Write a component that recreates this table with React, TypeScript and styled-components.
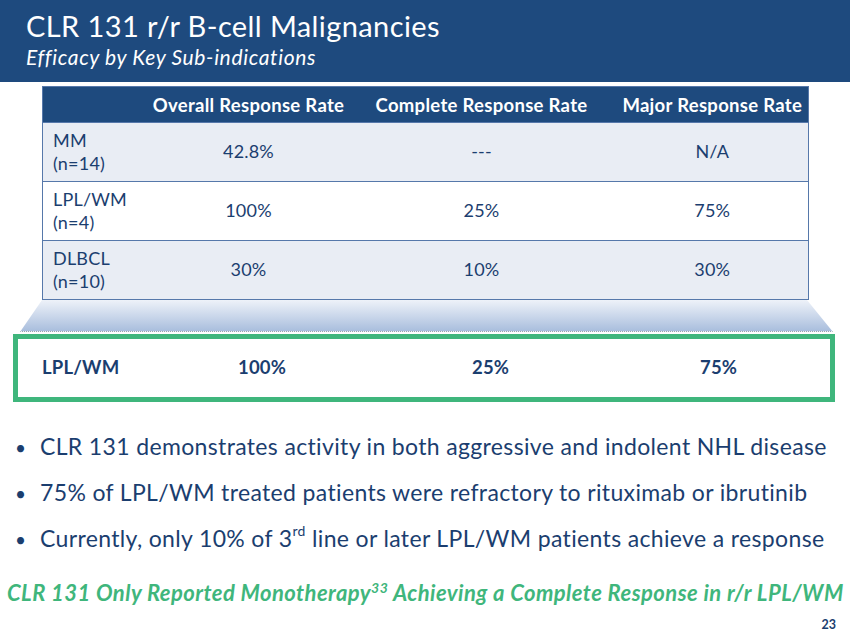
import styled, { createGlobalStyle } from "styled-components";

const GlobalStyle = createGlobalStyle`
  html, body {
    margin: 0;
    padding: 0;
    background: #fff;
  }
  body {
    font-family: Lato, "Open Sans", "Liberation Sans", sans-serif;
  }
`;

const navy = "#1b3e6f";
const green = "#3fb67c";

const Slide = styled.div`
  width: 850px;
  height: 638px;
  display: flex;
  flex-direction: column;
  overflow: hidden;
`;

const Header = styled.header`
  height: 82px;
  background: #1e4a7e;
  color: #fff;
  padding: 9px 0 0 26px;
  box-sizing: border-box;
`;

const Title = styled.h1`
  margin: 0;
  font-size: 29px;
  font-weight: 400;
  line-height: 34px;
  letter-spacing: 0.4px;
`;

const Subtitle = styled.div`
  font-size: 21px;
  font-style: italic;
  line-height: 26px;
  margin-top: 1px;
  letter-spacing: 0.65px;
`;

const Table = styled.table`
  margin: 4px 0 0 42px;
  width: 766px;
  border-collapse: collapse;
  table-layout: fixed;
  border: 1px solid #5678aa;
  color: ${navy};
  font-size: 18px;
  letter-spacing: 0.2px;
`;

const HeadCell = styled.th`
  background: #1e4a7e;
  color: #fff;
  font-weight: 700;
  font-size: 18.5px;
  letter-spacing: 0.3px;
  height: 35px;
  padding: 0;
  text-align: center;
  white-space: nowrap;
`;

const Row = styled.tr<{ $shaded?: boolean }>`
  background: ${(p) => (p.$shaded ? "#e9edf4" : "#fff")};
  border-top: 1px solid #5678aa;
  height: 59px;
`;

const LabelCell = styled.td`
  padding: 0 0 0 10px;
  line-height: 23px;
  vertical-align: middle;
`;

const ValueCell = styled.td`
  text-align: center;
  vertical-align: middle;
  padding: 0 0 2px;
`;

const Funnel = styled.div`
  margin: 0 0 0 20px;
  width: 813px;
  height: 32px;
  background: linear-gradient(#eef2f9, #a9bedd);
  clip-path: polygon(22px 0, 787px 0, 100% 100%, 0 100%);
  border-bottom: 1px dotted #9aa3ad;
  box-sizing: border-box;
`;

const Highlight = styled.div`
  margin: 2px 0 0 13px;
  width: 822px;
  height: 68px;
  box-sizing: border-box;
  border: 5px solid ${green};
  display: grid;
  grid-template-columns: 196px 234px 228px auto;
  align-items: center;
  padding: 0 0 2px 24px;
  color: ${navy};
  font-weight: 700;
  font-size: 18.5px;
  letter-spacing: 0.2px;
`;

const Bullets = styled.ul`
  list-style: none;
  margin: 22px 0 0 0;
  padding: 0;
  color: ${navy};
  font-size: 23px;
  letter-spacing: 0.35px;
`;

const Bullet = styled.li`
  display: flex;
  align-items: baseline;
  line-height: 45px;
  white-space: nowrap;

  &::before {
    content: "•";
    font-size: 19px;
    width: 40px;
    padding-left: 15px;
    box-sizing: border-box;
    flex: none;
  }

  sup {
    font-size: 14px;
    line-height: 0;
    position: relative;
    top: -2px;
  }
`;

const Tagline = styled.div`
  margin: 18px 0 0 7px;
  color: ${green};
  font-weight: 700;
  font-style: italic;
  font-size: 22px;
  line-height: 26px;
  white-space: nowrap;
  letter-spacing: 0.45px;

  sup {
    font-size: 14px;
    line-height: 0;
  }
`;

const PageNumber = styled.div`
  align-self: flex-end;
  margin: 11px 14px 0 0;
  color: ${navy};
  font-weight: 700;
  font-size: 12.5px;
`;

const rows = [
  { label: "MM", n: "(n=14)", orr: "42.8%", cr: "---", mr: "N/A", shaded: true },
  { label: "LPL/WM", n: "(n=4)", orr: "100%", cr: "25%", mr: "75%", shaded: false },
  { label: "DLBCL", n: "(n=10)", orr: "30%", cr: "10%", mr: "30%", shaded: true },
];

export default function App() {
  return (
    <>
      <GlobalStyle />
      <Slide>
        <Header>
          <Title>CLR 131 r/r B-cell Malignancies</Title>
          <Subtitle>Efficacy by Key Sub-indications</Subtitle>
        </Header>

        <Table>
          <colgroup>
            <col style={{ width: 108 }} />
            <col style={{ width: 196 }} />
            <col style={{ width: 270 }} />
            <col style={{ width: 192 }} />
          </colgroup>
          <thead>
            <tr>
              <HeadCell />
              <HeadCell>Overall Response Rate</HeadCell>
              <HeadCell>Complete Response Rate</HeadCell>
              <HeadCell>Major Response Rate</HeadCell>
            </tr>
          </thead>
          <tbody>
            {rows.map((r) => (
              <Row key={r.label} $shaded={r.shaded}>
                <LabelCell>
                  {r.label}
                  <br />
                  {r.n}
                </LabelCell>
                <ValueCell>{r.orr}</ValueCell>
                <ValueCell>{r.cr}</ValueCell>
                <ValueCell>{r.mr}</ValueCell>
              </Row>
            ))}
          </tbody>
        </Table>

        <Funnel />

        <Highlight>
          <span>LPL/WM</span>
          <span>100%</span>
          <span>25%</span>
          <span>75%</span>
        </Highlight>

        <Bullets>
          <Bullet>CLR 131 demonstrates activity in both aggressive and indolent NHL disease</Bullet>
          <Bullet>75% of LPL/WM treated patients were refractory to rituximab or ibrutinib</Bullet>
          <Bullet>
            <span>
              Currently, only 10% of 3<sup>rd</sup> line or later LPL/WM patients achieve a response
            </span>
          </Bullet>
        </Bullets>

        <Tagline>
          CLR 131 Only Reported Monotherapy<sup>33</sup> Achieving a Complete Response in r/r LPL/WM
        </Tagline>

        <PageNumber>23</PageNumber>
      </Slide>
    </>
  );
}
